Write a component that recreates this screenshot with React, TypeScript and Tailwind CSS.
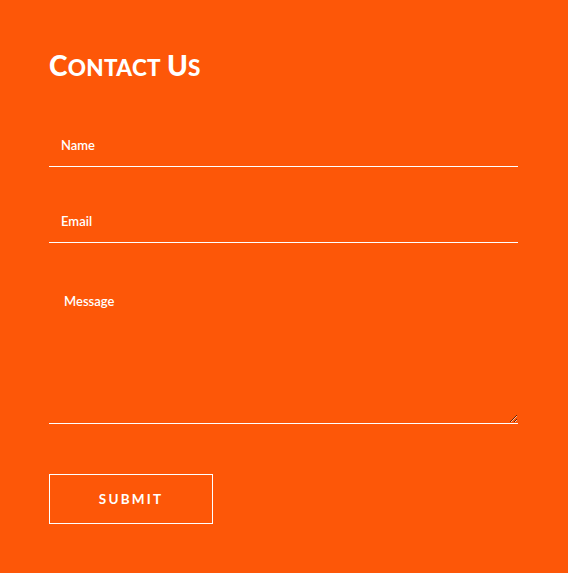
export default function App() {
  return (
    <div className="w-[568px] h-[573px] bg-[#fd5708] pl-[49px] pr-[50px] pt-[45px]" style={{ fontFamily: "Lato, 'Open Sans', sans-serif" }}>
      <h2 className="h-[40px] flex items-baseline text-white font-black leading-[40px] tracking-[0.3px]">
        <span className="text-[28px]">C</span>
        <span className="text-[22.5px]">ONTACT</span>
        <span className="text-[28px] ml-[6px]">U</span>
        <span className="text-[22.5px]">S</span>
      </h2>
      <form className="flex flex-col mt-[39px]" onSubmit={(e) => e.preventDefault()}>
        <input
          type="text"
          placeholder="Name"
          className="h-[43px] w-full bg-transparent border-0 border-b border-white outline-none pl-[12px] text-[13px] font-semibold text-white placeholder:text-white"
        />
        <input
          type="email"
          placeholder="Email"
          className="mt-[33px] h-[43px] w-full bg-transparent border-0 border-b border-white outline-none pl-[12px] text-[13px] font-semibold text-white placeholder:text-white"
        />
        <textarea
          placeholder="Message"
          className="mt-[33px] h-[148px] w-full bg-transparent border-0 border-b border-white outline-none pl-[15px] pt-[15px] text-[13px] leading-[20px] font-semibold text-white placeholder:text-white"
        />
        <div className="mt-[50px]">
          <button
            type="submit"
            className="w-[164px] h-[50px] border border-white text-white text-[13.5px] font-bold tracking-[2.2px]"
          >
            SUBMIT
          </button>
        </div>
      </form>
    </div>
  );
}
